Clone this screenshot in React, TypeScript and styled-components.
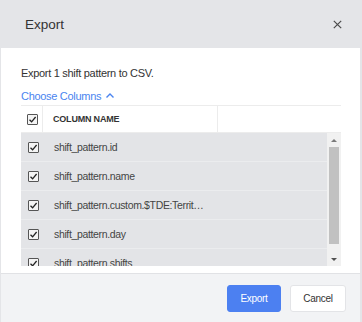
import React from 'react';
import styled, { createGlobalStyle } from 'styled-components';

const columns = [
  'shift_pattern.id',
  'shift_pattern.name',
  'shift_pattern.custom.$TDE:Territory_Code',
  'shift_pattern.day',
  'shift_pattern.shifts',
];

const GlobalStyle = createGlobalStyle`
  html, body {
    margin: 0;
    padding: 0;
    background: #e4e5e8;
  }
  body {
    font-family: 'Liberation Sans', Arial, sans-serif;
  }
`;

const Check = () => (
  <CheckBox>
    <svg width="9" height="9" viewBox="0 0 9 9">
      <polyline points="1.5,4.8 3.6,6.8 7.6,2" fill="none" stroke="#222" strokeWidth="1.3" />
    </svg>
  </CheckBox>
);

const App: React.FC = () => {
  return (
    <>
      <GlobalStyle />
      <Page>
        <Dialog>
          <Header>
            <Title>Export</Title>
            <CloseButton>
              <svg width="9" height="9" viewBox="0 0 9 9">
                <path d="M0.8 0.8 L8.2 8.2 M8.2 0.8 L0.8 8.2" stroke="#4a4a4a" strokeWidth="1.2" />
              </svg>
            </CloseButton>
          </Header>
          <Body>
            <Intro>Export 1 shift pattern to CSV.</Intro>
            <ChooseLink>
              Choose Columns
              <svg width="10" height="7" viewBox="0 0 10 7">
                <polyline points="1.5,5.5 5,2 8.5,5.5" fill="none" stroke="#4a84f0" strokeWidth="1.4" />
              </svg>
            </ChooseLink>
            <Table>
              <HeadRow>
                <HeadCell $width={22} $center>
                  <Check />
                </HeadCell>
                <HeadCell $width={175}>COLUMN NAME</HeadCell>
                <HeadCell />
              </HeadRow>
              <BodyArea>
                <Rows>
                  {columns.map((c) => (
                    <Row key={c}>
                      <BoxCell>
                        <Check />
                      </BoxCell>
                      <NameCell>{c}</NameCell>
                    </Row>
                  ))}
                </Rows>
                <ScrollBar>
                  <ScrollArrow $up />
                  <Thumb />
                  <ScrollArrow />
                </ScrollBar>
              </BodyArea>
            </Table>
          </Body>
          <Footer>
            <Button $primary $width={54}>Export</Button>
            <Button $width={56}>Cancel</Button>
          </Footer>
        </Dialog>
      </Page>
    </>
  );
};

const Page = styled.div`
  width: 362px;
  height: 322px;
  overflow: hidden;
`;

const Dialog = styled.div`
  width: 359px;
  margin-left: 1px;
  display: flex;
  flex-direction: column;
`;

const Header = styled.div`
  height: 48px;
  display: flex;
  align-items: center;
  justify-content: space-between;
  padding: 0 18px 0 24px;
  box-sizing: border-box;
`;

const Title = styled.div`
  font-size: 13.5px;
  color: #333;
  padding-top: 1px;
`;

const CloseButton = styled.div`
  display: flex;
  align-items: center;
  justify-content: center;
  width: 10px;
  height: 10px;
`;

const Body = styled.div`
  background: #fff;
  padding: 18px 20px 7px 20px;
  display: flex;
  flex-direction: column;
`;

const Intro = styled.div`
  font-size: 11px;
  letter-spacing: -0.3px;
  line-height: 14px;
  color: #333;
`;

const ChooseLink = styled.div`
  margin-top: 9px;
  font-size: 11px;
  letter-spacing: -0.3px;
  line-height: 14px;
  color: #4a84f0;
  display: flex;
  align-items: center;
  gap: 4px;
  svg {
    margin-top: -2px;
  }
`;

const Table = styled.div`
  margin-top: 2px;
  width: 320px;
  border-top: 1px solid #ececec;
`;

const HeadRow = styled.div`
  display: flex;
  height: 26px;
  border-bottom: 1px solid #ececec;
`;

const HeadCell = styled.div<{ $width?: number; $center?: boolean }>`
  ${(p) => (p.$width ? `width: ${p.$width}px;` : 'flex: 1;')}
  display: flex;
  align-items: center;
  justify-content: ${(p) => (p.$center ? 'center' : 'flex-start')};
  padding-left: ${(p) => (p.$center ? 1 : 10)}px;
  box-sizing: border-box;
  border-right: 1px solid #ececec;
  font-size: 9px;
  letter-spacing: -0.2px;
  font-weight: 700;
  color: #333;
  &:last-child {
    border-right: none;
  }
`;

const BodyArea = styled.div`
  display: flex;
  height: 133px;
  overflow: hidden;
`;

const Rows = styled.div`
  flex: 1;
  display: flex;
  flex-direction: column;
`;

const Row = styled.div`
  display: flex;
  flex-shrink: 0;
  height: 29px;
  background: #e3e4e7;
  border-bottom: 1px solid #ebecee;
  box-sizing: border-box;
`;

const BoxCell = styled.div`
  width: 22px;
  display: flex;
  align-items: center;
  justify-content: center;
  padding-left: 1px;
`;

const NameCell = styled.div`
  width: 175px;
  padding: 0 10px;
  box-sizing: border-box;
  font-size: 10.5px;
  letter-spacing: -0.35px;
  color: #444;
  line-height: 29px;
  white-space: nowrap;
  overflow: hidden;
  text-overflow: ellipsis;
`;

const CheckBox = styled.div`
  width: 11px;
  height: 11px;
  box-sizing: border-box;
  border: 1px solid #555;
  border-radius: 1px;
  background: #f4f4f4;
  display: flex;
  align-items: center;
  justify-content: center;
`;

const ScrollBar = styled.div`
  width: 14px;
  background: #f1f1f1;
  display: flex;
  flex-direction: column;
  justify-content: space-between;
`;

const ScrollArrow = styled.div<{ $up?: boolean }>`
  height: 14px;
  display: flex;
  align-items: center;
  justify-content: center;
  &::before {
    content: '';
    width: 0;
    height: 0;
    border-left: 3px solid transparent;
    border-right: 3px solid transparent;
    ${(p) => (p.$up ? 'border-bottom: 3px solid #7a7a7a;' : 'border-top: 3px solid #505050;')}
  }
`;

const Thumb = styled.div`
  height: 97px;
  margin: 0 2px 8px 2px;
  background: #c1c1c1;
`;

const Footer = styled.div`
  height: 50px;
  box-sizing: border-box;
  background: #f2f3f5;
  border-top: 1px solid #e1e2e5;
  display: flex;
  justify-content: flex-end;
  align-items: flex-start;
  padding: 11px 14px 0 0;
  gap: 9px;
`;

const Button = styled.div<{ $primary?: boolean; $width: number }>`
  width: ${(p) => p.$width}px;
  height: 27px;
  box-sizing: border-box;
  display: flex;
  align-items: center;
  justify-content: center;
  border-radius: 3px;
  font-size: 10px;
  letter-spacing: -0.3px;
  background: ${(p) => (p.$primary ? '#4c80f1' : '#fff')};
  color: ${(p) => (p.$primary ? '#fff' : '#333')};
  border: 1px solid ${(p) => (p.$primary ? '#4c80f1' : '#e3e4e7')};
`;

export default App;
